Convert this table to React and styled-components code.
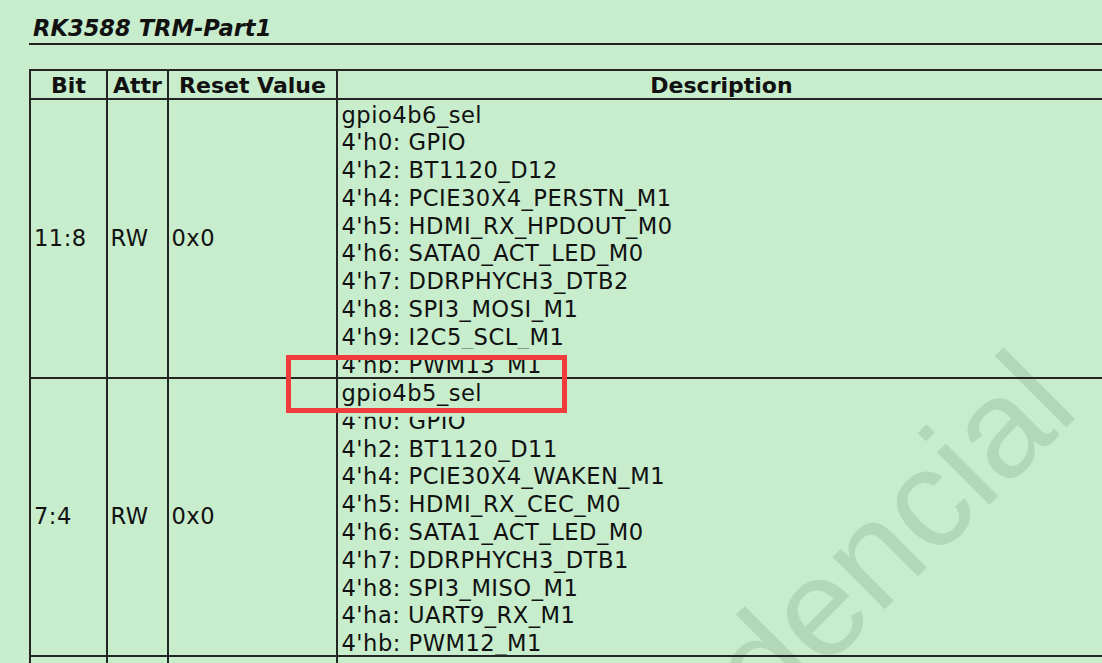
import React from 'react';
import styled, { createGlobalStyle, css } from 'styled-components';

const rows = [
	{
		bit: '11:8',
		attr: 'RW',
		reset: '0x0',
		height: 279,
		top: 1.5,
		lines: [
			['gpio4b6_sel'],
			["4'h0: GPIO"],
			["4'h2: BT1120_D12"],
			["4'h4: PCIE30X4_PERSTN_M1"],
			["4'h5: HDMI_RX_HPDOUT_M0"],
			["4'h6: SATA0_ACT_LED_M0"],
			["4'h7: DDRPHYCH3_DTB2"],
			["4'h8: SPI3_MOSI_M1"],
			["4'h9: I2C5_SCL_M1", '0 0 3px 0'],
			["4'hb: PWM13_M1", '8px 0 5px 0'],
		],
	},
	{
		bit: '7:4',
		attr: 'RW',
		reset: '0x0',
		height: 278,
		top: 1,
		lines: [
			['gpio4b5_sel'],
			["4'h0: GPIO", '9px 0 0 0'],
			["4'h2: BT1120_D11"],
			["4'h4: PCIE30X4_WAKEN_M1"],
			["4'h5: HDMI_RX_CEC_M0"],
			["4'h6: SATA1_ACT_LED_M0"],
			["4'h7: DDRPHYCH3_DTB1"],
			["4'h8: SPI3_MISO_M1"],
			["4'ha: UART9_RX_M1"],
			["4'hb: PWM12_M1"],
		],
	},
	{
		bit: '',
		attr: '',
		reset: '',
		height: 40,
		top: 4,
		lines: [['gpio4b4_sel']],
	},
];

const App = () => {
	return (
		<>
			<GlobalStyle />
			<Page>
				<TitleBar>
					<Title>RK3588 TRM-Part1</Title>
				</TitleBar>

				<Watermark>dencial</Watermark>

				<Table>
					<colgroup>
						<Col $w={77} />
						<Col $w={61} />
						<Col $w={169} />
						<Col $w={769} />
					</colgroup>
					<thead>
						<Row $h={29}>
							<HeadCell>Bit</HeadCell>
							<HeadCell>Attr</HeadCell>
							<HeadCell>Reset Value</HeadCell>
							<HeadCell>Description</HeadCell>
						</Row>
					</thead>
					<tbody>
						{rows.map((r, i) => (
							<Row key={i} $h={r.height}>
								<Cell $pl={3}>{r.bit}</Cell>
								<Cell>{r.attr}</Cell>
								<Cell>{r.reset}</Cell>
								<DescCell>
									<Lines $h={r.height - 2} $pt={r.top}>
										{r.lines.map(([text, clip]) => (
											<Line key={text} $clip={clip}>
												{text}
											</Line>
										))}
									</Lines>
								</DescCell>
							</Row>
						))}
					</tbody>
				</Table>

				<Highlight />
			</Page>
		</>
	);
};

const GlobalStyle = createGlobalStyle`
	html, body {
		margin: 0;
		padding: 0;
		background-color: #c7edcc;
		overflow: hidden;
	}
	body {
		font-family: "DejaVu Sans", Verdana, sans-serif;
		color: #111;
	}
`;

const Page = styled.div`
	position: relative;
	width: 1102px;
	height: 663px;
	overflow: hidden;
	box-sizing: border-box;
	padding: 15px 0 0 29px;
`;

const TitleBar = styled.div`
	padding: 0 0 2px 4px;
	border-bottom: 2px solid #222;
`;

const Title = styled.h1`
	margin: 0;
	font-size: 22.6px;
	line-height: 26px;
	font-weight: bold;
	font-style: italic;
	color: #111;
`;

const Watermark = styled.div`
	position: absolute;
	left: 768px;
	top: 608px;
	font-family: "Liberation Sans", Arial, sans-serif;
	font-size: 140px;
	line-height: 1;
	color: #b3d8b7;
	white-space: nowrap;
	transform-origin: 0 118px;
	transform: rotate(-45deg);
	pointer-events: none;
	z-index: 0;
`;

const Table = styled.table`
	position: relative;
	z-index: 1;
	margin-top: 24px;
	width: 1077px;
	table-layout: fixed;
	border-collapse: collapse;
`;

const Col = styled.col`
	width: ${(p) => p.$w}px;
`;

const Row = styled.tr`
	height: ${(p) => p.$h}px;
`;

const HeadCell = styled.th`
	border: 2px solid #252525;
	padding: 2px 0 0;
	font-size: 22px;
	line-height: 25px;
	font-weight: bold;
	text-align: center;
	vertical-align: middle;
	white-space: nowrap;
`;

const Cell = styled.td`
	border: 2px solid #252525;
	padding: 0 2px 0 ${(p) => p.$pl || 2.5}px;
	font-size: 22.6px;
	line-height: 27.8px;
	letter-spacing: 0.5px;
	vertical-align: middle;
	white-space: nowrap;
	overflow: hidden;
`;

const DescCell = styled(Cell)`
	vertical-align: top;
	padding-left: 3.5px;
`;

const Lines = styled.div`
	box-sizing: border-box;
	height: ${(p) => p.$h}px;
	padding-top: ${(p) => p.$pt}px;
	overflow: hidden;
`;

const Line = styled.div`
	height: 27.8px;
	white-space: nowrap;
	${(p) =>
		p.$clip &&
		css`
			clip-path: inset(${p.$clip});
		`}
`;

const Highlight = styled.div`
	position: absolute;
	left: 286px;
	top: 355px;
	width: 281px;
	height: 58px;
	box-sizing: border-box;
	border: 5px solid #f03b3b;
	z-index: 2;
`;

export default App;
